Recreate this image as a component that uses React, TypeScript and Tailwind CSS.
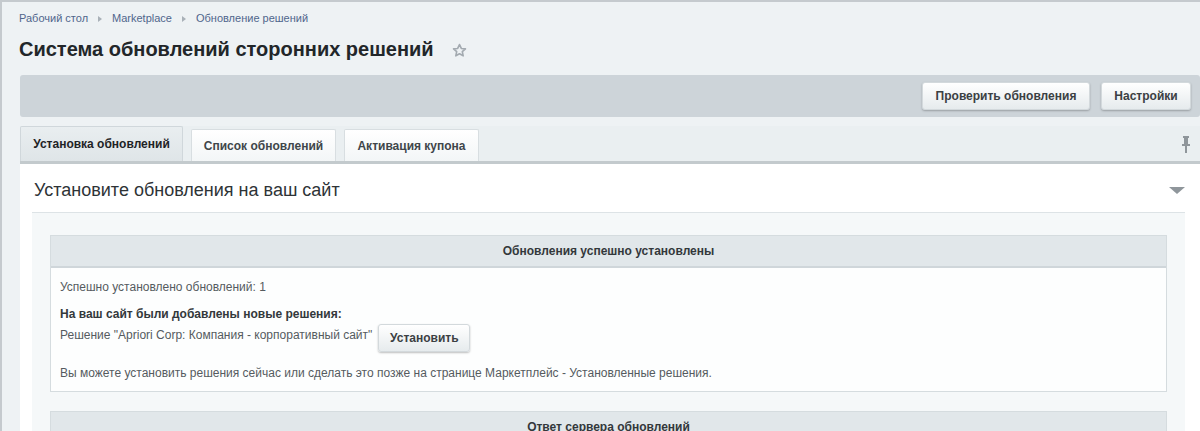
import React from 'react';

const font = "font-['Liberation_Sans',Arial,sans-serif]";

const Crumbs = () => (
  <div className="flex items-center text-[11px] leading-[13px] text-[#50668c]">
    <span>Рабочий стол</span>
    <span className="mx-[10px] w-0 h-0 border-y-[3px] border-y-transparent border-l-[4px] border-l-[#a9b1b8]" />
    <span>Marketplace</span>
    <span className="mx-[10px] w-0 h-0 border-y-[3px] border-y-transparent border-l-[4px] border-l-[#a9b1b8]" />
    <span>Обновление решений</span>
  </div>
);

const Star = () => (
  <svg width="15" height="15" viewBox="0 0 24 24" fill="none" stroke="#a3aab0" strokeWidth="2.6" strokeLinejoin="round">
    <path d="M12 2.5l2.9 6.2 6.6.7-5 4.5 1.4 6.6L12 17.2l-5.9 3.3 1.4-6.6-5-4.5 6.6-.7z" />
  </svg>
);

const Pin = () => (
  <svg width="10" height="17" viewBox="0 0 10 17" fill="#8f969b">
    <rect x="2" y="0" width="6" height="2" />
    <rect x="3" y="2" width="4" height="6" />
    <rect x="1" y="8" width="8" height="2" />
    <rect x="4" y="10" width="2" height="7" />
  </svg>
);

const Btn = ({ children, w }: { children: React.ReactNode; w: string }) => (
  <button
    className={`${w} h-[28px] rounded-[3px] bg-gradient-to-b from-white to-[#e6ebed] border border-[#d3d9dc] shadow-[0_1px_2px_rgba(0,0,0,0.25)] text-[12px] font-bold text-[#3b4043]`}
  >
    {children}
  </button>
);

const Tab = ({ label, w, active }: { label: string; w: string; active?: boolean }) => (
  <div
    className={`${w} flex items-center justify-center text-[12px] font-bold ${
      active
        ? 'h-[35px] bg-gradient-to-b from-[#e9eef0] to-[#dfe5e8] border border-[#d0d7db] border-b-0 text-[#1f2326]'
        : 'h-[32px] bg-gradient-to-b from-white to-[#f3f6f7] border border-[#d8dee1] border-b-0 text-[#40464a]'
    } rounded-t-[2px]`}
  >
    {label}
  </div>
);

const TableBlock = ({ title, children }: { title: string; children?: React.ReactNode }) => (
  <div className="border border-[#d5dcdf] bg-[#fdfefe]">
    <div className="h-[32px] flex items-center justify-center bg-[#e1e7ea] border-b-2 border-[#cfd6da] text-[12px] font-bold text-[#33383b]">
      {title}
    </div>
    {children}
  </div>
);

export default function App() {
  return (
    <div className={`w-[1200px] h-[431px] overflow-hidden bg-[#eef2f4] border-t-2 border-l-2 border-[#c5cace] ${font}`}>
      <div className="pl-[17px] pt-[10px]">
        <Crumbs />
        <div className="mt-[12px] flex items-center h-[24px]">
          <h1 className="text-[20px] font-bold text-[#222629] leading-[24px]">Система обновлений сторонних решений</h1>
          <span className="ml-[18px] mt-[3px]"><Star /></span>
        </div>
      </div>

      <div className="ml-[18px] mt-[14px]">
        <div className="h-[42px] rounded-[3px] bg-[#cdd4d9] flex items-center justify-end gap-[11px] pr-[9px]">
          <Btn w="w-[168px]">Проверить обновления</Btn>
          <Btn w="w-[90px]">Настройки</Btn>
        </div>

        <div className="mt-[9px] flex items-end justify-between border-b-[3px] border-[#c3cacd] bg-[#eaeff1]">
          <div className="flex items-end gap-[8px]">
            <Tab label="Установка обновлений" w="w-[163px]" active />
            <Tab label="Список обновлений" w="w-[145px]" />
            <Tab label="Активация купона" w="w-[135px]" />
          </div>
          <div className="pr-[9px] pb-[8px]"><Pin /></div>
        </div>

        <div className="bg-white">
          <div className="h-[48px] pt-[5px] flex items-center justify-between pl-[14px] pr-[15px]">
            <span className="text-[18px] text-[#2e3336]">Установите обновления на ваш сайт</span>
            <span className="w-0 h-0 border-x-[8px] border-x-transparent border-t-[7px] border-t-[#8f969b]" />
          </div>
          <div className="ml-[12px] mr-[15px] border-t border-[#dde3e6] bg-[#f5f8f9] px-[18px] pt-[22px] pb-[19px] flex flex-col gap-[19px]">
            <TableBlock title="Обновления успешно установлены">
              <div className="px-[9px] pt-[12px] pb-[10px] text-[12px] text-[#555b5f]">
                <div className="leading-[15px]">Успешно установлено обновлений: 1</div>
                <div className="mt-[12px] leading-[15px] font-bold text-[#33383b]">На ваш сайт были добавлены новые решения:</div>
                <div className="flex items-center gap-[6px] mt-[2px]">
                  <span className="leading-[15px] -mt-[5px]">Решение "Apriori Corp: Компания - корпоративный сайт"</span>
                  <Btn w="w-[92px]">Установить</Btn>
                </div>
                <div className="mt-[14px] leading-[15px]">Вы можете установить решения сейчас или сделать это позже на странице Маркетплейс - Установленные решения.</div>
              </div>
            </TableBlock>
            <TableBlock title="Ответ сервера обновлений">
              <div className="h-[60px]" />
            </TableBlock>
          </div>
        </div>
      </div>
    </div>
  );
}
